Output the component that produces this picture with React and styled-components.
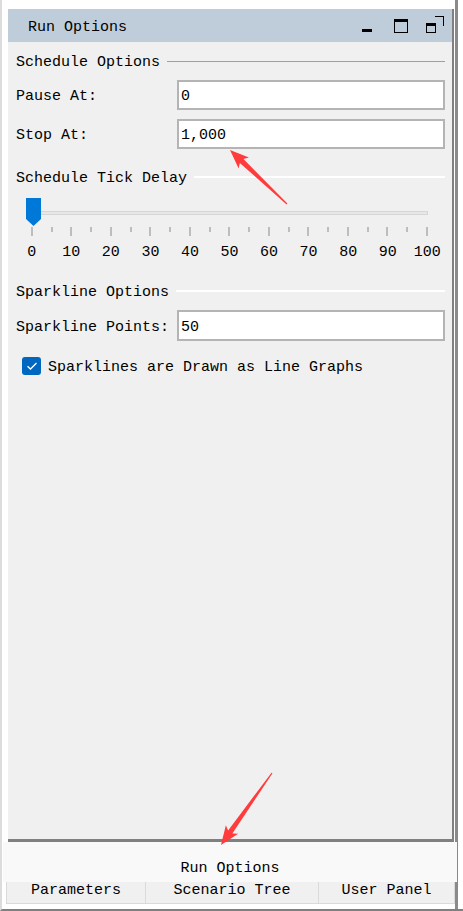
import styled, { createGlobalStyle } from "styled-components";

const GlobalStyle = createGlobalStyle`
  html, body { margin: 0; padding: 0; background: #fff; }
  body {
    font-family: "Liberation Mono", "DejaVu Sans Mono", monospace;
    font-size: 15px;
    color: #000;
  }
  * { box-sizing: border-box; }
`;

const Page = styled.div`
  position: relative;
  width: 463px;
  height: 911px;
`;

const Frame = styled.div`
  width: 463px;
  height: 911px;
  background: #fff;
  border-left: 2px solid #dcdcdc;
  border-bottom: 2px solid #808080;
  overflow: hidden;
`;

const Window = styled.div`
  width: 456px;
  height: 100%;
  border-right: 3px solid #8a8a8a;
  padding-top: 9px;
  display: flex;
  flex-direction: column;
`;

const Panel = styled.div`
  height: 833px;
  margin: 0 1px 0 6px;
  background: #f0f0f0;
  border-right: 2px solid #808080;
  border-bottom: 3px solid #808080;
  display: flex;
  flex-direction: column;
`;

const TitleBar = styled.div`
  height: 33px;
  background: #bfcddb;
  display: flex;
  align-items: center;
  padding-left: 20px;
`;

// 20px tall text box, glyphs sit 2px lower than a plain centered line
const Label = styled.span`
  display: block;
  height: 20px;
  padding-top: 4px;
  line-height: 16px;
  white-space: nowrap;
`;

const Controls = styled.div`
  margin-left: auto;
  display: flex;
`;

const ControlButton = styled.div`
  width: 34px;
  height: 33px;
  display: flex;
  align-items: center;
  justify-content: center;
  svg { display: block; margin-top: 1px; }
`;

const Body = styled.div`
  padding: 9px 7px 0 8px;
  display: flex;
  flex-direction: column;
`;

const GroupHeader = styled.div`
  display: flex;
  align-items: center;
  gap: 7px;
  height: 20px;
  margin-top: ${(p) => p.$top || 0}px;
`;

const HeaderLine = styled.div`
  flex: 1;
  height: ${(p) => (p.$etched ? 1 : 2)}px;
  background: ${(p) => (p.$etched ? "#a0a0a0" : "#ffffff")};
`;

const FieldRow = styled.div`
  display: grid;
  grid-template-columns: 161px 1fr;
  align-items: center;
  margin-top: 9px;
`;

const ValueInput = styled.input`
  height: ${(p) => p.$h || 30}px;
  width: 100%;
  border: 2px solid #b4b4b4;
  background: #fff;
  padding: 3px 2px 0;
  font: inherit;
  color: #000;
  outline: none;
`;

const SliderBlock = styled.div`
  width: 435px;
  margin: 11px 0 0 -4px;
`;

const TrackArea = styled.div`
  position: relative;
  height: 29px;
  padding-top: 13px;
`;

const Track = styled.div`
  margin-left: 21px;
  width: 395px;
  height: 4px;
  background: #e7e7e7;
  border: 1px solid #d6d6d6;
`;

const Thumb = styled.div`
  position: absolute;
  left: 14px;
  top: 0;
  width: 15px;
  height: 28px;
  background: #0078d7;
  clip-path: polygon(0 0, 100% 0, 100% 75%, 50% 100%, 0 75%);
`;

const Ticks = styled.svg`
  display: block;
`;

const TickLabels = styled.div`
  display: grid;
  grid-template-columns: repeat(11, 1fr);
  margin-top: 4px;
  text-align: center;
`;

const CheckRow = styled.div`
  display: flex;
  align-items: center;
  gap: 7px;
  margin-top: 15px;
  padding-left: 6px;
`;

const CheckBox = styled.div`
  width: 19px;
  height: 18px;
  border-radius: 3px;
  background: #0067c0;
  display: flex;
  align-items: center;
  justify-content: center;
`;

const SelectedTab = styled.div`
  height: 40px;
  margin: 0 -2px 0 1px;
  background: #f9f9f9;
  padding-top: 17px;
  line-height: 20px;
  text-align: center;
`;

const TabRow = styled.div`
  height: 22px;
  margin-left: 4px;
  display: grid;
  grid-template-columns: 139px 173px 1fr;
  background: #f0f0f0;
  border-left: 1px solid #dadada;
  border-bottom: 1px solid #dadada;
`;

const Tab = styled.div`
  border-right: 1px solid #dadada;
  text-align: center;
  padding-top: 1px;
  line-height: 16px;
  white-space: nowrap;
`;

const Overlay = styled.svg`
  position: absolute;
  left: 0;
  top: 0;
  pointer-events: none;
`;

const ticks = Array.from({ length: 11 }, (_, i) => i * 10);
const tickX = (i) => 19.75 + i * 39.5;

const Arrow = ({ x1, y1, x2, y2 }) => {
  const dx = x2 - x1;
  const dy = y2 - y1;
  const L = Math.sqrt(dx * dx + dy * dy);
  const a = (Math.atan2(dy, dx) * 180) / Math.PI;
  const pts = `0,-0.6 ${L - 16},-2.6 ${L - 19},-7.5 ${L},0 ${L - 19},7.5 ${L - 16},2.6 0,0.6`;
  return <polygon points={pts} fill="#ff3b3b" transform={`translate(${x1} ${y1}) rotate(${a})`} />;
};

export default function App() {
  return (
    <Page>
      <GlobalStyle />
      <Frame>
        <Window>
          <Panel>
            <TitleBar>
              <Label>Run Options</Label>
              <Controls>
                <ControlButton>
                  <svg width="20" height="20" viewBox="0 0 20 20">
                    <rect x="5" y="13" width="10" height="3" fill="#000" />
                  </svg>
                </ControlButton>
                <ControlButton>
                  <svg width="20" height="20" viewBox="0 0 20 20">
                    <rect x="3" y="3" width="14" height="3" fill="#000" />
                    <rect x="3" y="3" width="1" height="14" fill="#000" />
                    <rect x="16" y="3" width="1" height="14" fill="#000" />
                    <rect x="3" y="16" width="14" height="1" fill="#000" />
                  </svg>
                </ControlButton>
                <ControlButton>
                  <svg width="20" height="20" viewBox="0 0 20 20">
                    <rect x="1" y="7" width="10" height="3" fill="#000" />
                    <rect x="1" y="7" width="1" height="10" fill="#000" />
                    <rect x="10" y="7" width="1" height="10" fill="#000" />
                    <rect x="1" y="16" width="10" height="1" fill="#000" />
                    <rect x="10" y="0" width="9" height="1" fill="#000" />
                    <rect x="18" y="0" width="1" height="10" fill="#000" />
                  </svg>
                </ControlButton>
              </Controls>
            </TitleBar>

            <Body>
              <GroupHeader>
                <Label>Schedule Options</Label>
                <HeaderLine $etched />
              </GroupHeader>
              <FieldRow>
                <Label>Pause At:</Label>
                <ValueInput defaultValue="0" />
              </FieldRow>
              <FieldRow>
                <Label>Stop At:</Label>
                <ValueInput defaultValue="1,000" />
              </FieldRow>

              <GroupHeader $top={18}>
                <Label>Schedule Tick Delay</Label>
                <HeaderLine />
              </GroupHeader>
              <SliderBlock>
                <TrackArea>
                  <Track />
                  <Thumb />
                </TrackArea>
                <Ticks width="435" height="10" viewBox="0 0 435 10">
                  {ticks.map((t, i) => (
                    <rect key={t} x={Math.round(tickX(i)) - 1} y="0" width="2" height="9" fill="#bdbdbd" />
                  ))}
                  {ticks.slice(0, 10).map((t, i) => (
                    <rect key={`m${t}`} x={Math.round(tickX(i) + 19.75) - 1} y="0" width="2" height="5" fill="#bdbdbd" />
                  ))}
                </Ticks>
                <TickLabels>
                  {ticks.map((t) => (
                    <Label key={t}>{t}</Label>
                  ))}
                </TickLabels>
              </SliderBlock>

              <GroupHeader $top={20}>
                <Label>Sparkline Options</Label>
                <HeaderLine />
              </GroupHeader>
              <FieldRow>
                <Label>Sparkline Points:</Label>
                <ValueInput $h={31} defaultValue="50" />
              </FieldRow>
              <CheckRow>
                <CheckBox>
                  <svg width="12" height="10" viewBox="0 0 12 10">
                    <path d="M1.5 5.2 L4.5 8 L10.5 2" fill="none" stroke="#fff" strokeWidth="1.3" />
                  </svg>
                </CheckBox>
                <Label>Sparklines are Drawn as Line Graphs</Label>
              </CheckRow>
            </Body>
          </Panel>

          <SelectedTab>Run Options</SelectedTab>
          <TabRow>
            <Tab>Parameters</Tab>
            <Tab>Scenario Tree</Tab>
            <Tab>User Panel</Tab>
          </TabRow>
        </Window>
      </Frame>
      <Overlay width="463" height="911" viewBox="0 0 463 911">
        <Arrow x1={287} y1={204} x2={230} y2={150} />
        <Arrow x1={272} y1={773} x2={221} y2={845} />
      </Overlay>
    </Page>
  );
}
